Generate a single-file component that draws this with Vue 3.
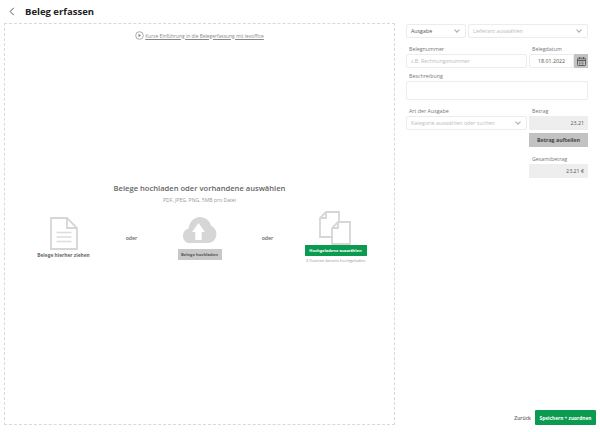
<template>
  <div class="page">
    <header class="head">
      <svg class="back" width="6" height="9" viewBox="0 0 6 9"><path d="M4.8 .8 1.2 4.5l3.6 3.7" fill="none" stroke="#555" stroke-width="1"/></svg>
      <h1>Beleg erfassen</h1>
    </header>

    <div class="main">
      <section class="drop">
        <a class="intro">
          <svg width="9" height="9" viewBox="0 0 9 9"><circle cx="4.5" cy="4.5" r="3.8" fill="none" stroke="#888" stroke-width=".7"/><path d="M3.5 2.7 6 4.5 3.5 6.300z" fill="#888"/></svg>
          <span>Kurze Einführung in die Belegerfassung mit lexoffice</span>
        </a>
        <h2>Belege hochladen oder vorhandene auswählen</h2>
        <p class="types">PDF, JPEG, PNG, 5MB pro Datei</p>

        <div class="options">
          <div class="opt">
            <svg width="28" height="33" viewBox="0 0 28 33" fill="none" stroke="#d6d6d6" stroke-width="1.800">
              <path d="M1 1h16l10 10v21H1z"/><path d="M17 1v10h10"/>
              <path d="M6.500 15.500h15M6.500 20h15M6.500 24.500h15" stroke="#dcdcdc" stroke-width="1.300"/>
            </svg>
            <strong class="drag">Belege hierher ziehen</strong>
          </div>
          <div class="or">oder</div>
          <div class="opt">
            <svg width="36" height="27" viewBox="0 0 36 27">
              <path d="M8 26C3.800 26 1 22.800 1 18.900c0-3.600 2.400-6.500 5.600-7.300C7.300 5 12 0 18 0c5.400 0 9.800 3.600 11 8.700 3.100 1.200 5.400 4.500 5.400 8.300 0 5-3.700 9-8.400 9z" fill="#d6d6d6"/>
              <path d="M16.500 6 23 15h-3.300v8h-6.400v-8H10z" fill="#fff"/>
            </svg>
            <button class="btn grey" type="button">Belege hochladen</button>
          </div>
          <div class="or">oder</div>
          <div class="opt files">
            <svg width="33" height="34" viewBox="0 0 33 34" fill="none" stroke="#d6d6d6" stroke-width="1.800">
              <path d="M13 26H1V7l6-6h13v10"/><path d="M7 1v6H1"/>
              <path d="M13 33V17l6-6h12v22z" fill="#fff"/><path d="M19 11v6h-6"/>
            </svg>
            <button class="btn green" type="button">Hochgeladene auswählen</button>
            <small>3 Dateien bereits hochgeladen</small>
          </div>
        </div>
      </section>

      <aside class="side">
        <div class="row">
          <div class="field select type"><span class="val">Ausgabe</span><i class="chev"></i></div>
          <div class="field select grow"><span class="ph">Lieferant auswählen</span><i class="chev"></i></div>
        </div>

        <div class="row labelled first">
          <div class="col grow">
            <label>Belegnummer</label>
            <div class="field"><span class="ph">z.B. Rechnungsnummer</span></div>
          </div>
          <div class="col amount">
            <label>Belegdatum</label>
            <div class="date">
              <div class="field center"><span class="val">18.01.2022</span></div>
              <div class="cal">
                <svg width="9" height="9" viewBox="0 0 9 9"><rect x=".5" y="1.200" width="8" height="7.300" rx="1" fill="none" stroke="#555" stroke-width=".9"/><path d="M.5 3.300h8" stroke="#555" stroke-width="1.200"/><path d="M2.500 0v2M6.500 0v2" stroke="#555"/><path d="M2 5h5M2 6.800h5" stroke="#555" stroke-width=".8" stroke-dasharray="1 .5"/></svg>
              </div>
            </div>
          </div>
        </div>

        <label class="desc">Beschreibung</label>
        <div class="field area"></div>

        <div class="row labelled second">
          <div class="col grow">
            <label>Art der Ausgabe</label>
            <div class="field select"><span class="ph">Kategorie auswählen oder suchen</span><i class="chev"></i></div>
          </div>
          <div class="col amount">
            <label>Betrag</label>
            <div class="sum">23,21</div>
            <button class="split" type="button">Betrag aufteilen</button>
            <label class="total">Gesamtbetrag</label>
            <div class="sum">23,21 €</div>
          </div>
        </div>

        <footer class="foot">
          <a class="backlink">Zurück</a>
          <button class="btn green save" type="button">Speichern + zuordnen</button>
        </footer>
      </aside>
    </div>
  </div>
</template>

<script setup>
</script>

<style scoped>
.page {
  width: 600px;
  height: 432px;
  box-sizing: border-box;
  overflow: hidden;
  display: flex;
  flex-direction: column;
  background: #fff;
  font-family: "Open Sans", "Noto Sans", sans-serif;
  color: #666;
}

.head {
  height: 23px;
  flex: none;
  display: flex;
  align-items: center;
  gap: 10px;
  padding-left: 9px;
  box-sizing: border-box;
}

.back {
  flex: none;
}

h1 {
  margin: 0;
  font-size: 9.500px;
  font-weight: 700;
  color: #222;
}

.main {
  flex: 1;
  display: flex;
  padding: 0 4px 7px 4px;
  min-height: 0;
}

.drop {
  width: 391px;
  box-sizing: border-box;
  border: 1px dashed #d9d9d9;
  display: flex;
  flex-direction: column;
  align-items: center;
}

.intro {
  margin-top: 7px;
  display: flex;
  align-items: center;
  gap: 1px;
  font-size: 4.900px;
  color: #888;
  height: 9px;
}

.intro span {
  text-decoration: underline;
}

h2 {
  margin: 142px 0 0;
  font-size: 7.600px;
  line-height: 12px;
  font-weight: 600;
  color: #666;
}

.types {
  margin: 2px 0 0;
  font-size: 5.100px;
  line-height: 8px;
  color: #999;
}

.options {
  margin-top: 7px;
  display: grid;
  grid-template-columns: repeat(5, 68px);
  align-items: start;
}

.opt {
  display: flex;
  flex-direction: column;
  align-items: center;
  padding-top: 6px;
  white-space: nowrap;
}

.opt.files {
  padding-top: 0;
}

.drag {
  margin-top: 1px;
  font-size: 4.850px;
  line-height: 8px;
  font-weight: 700;
  color: #666;
}

.or {
  padding-top: 23px;
  text-align: center;
  font-size: 5.200px;
  line-height: 8px;
  font-weight: 600;
  color: #666;
}

.btn {
  border: none;
  padding: 0;
  font-family: inherit;
  font-weight: 700;
}

.grey {
  margin-top: 5px;
  width: 44px;
  height: 11px;
  background: #c8c8c8;
  color: #555;
  font-size: 4.200px;
}

.green {
  background: #0a9a50;
  color: #fff;
}

.files .green {
  margin-top: 0;
  width: 62px;
  height: 11px;
  font-size: 4.100px;
}

small {
  margin-top: 1px;
  font-size: 4.200px;
  line-height: 8px;
  color: #999;
}

.side {
  flex: 1;
  min-width: 0;
  display: flex;
  flex-direction: column;
  padding-left: 11px;
  padding-right: 12px;
  margin-right: -4px;
  margin-top: 1px;
}

.row {
  display: flex;
  gap: 2px;
}

.col {
  display: flex;
  flex-direction: column;
  min-width: 0;
}

.grow {
  flex: 1;
  min-width: 0;
}

.amount {
  width: 59px;
  flex: none;
}

label {
  font-size: 5.300px;
  line-height: 8px;
  color: #777;
  padding-left: 3px;
  margin-bottom: 1px;
}

.field {
  height: 14px;
  box-sizing: border-box;
  border: 1px solid #ececec;
  border-radius: 2px;
  display: flex;
  align-items: center;
  padding: 0 4px;
  font-size: 5.300px;
  background: #fff;
}

.type {
  width: 60px;
  flex: none;
}

.val {
  color: #555;
}

.ph {
  color: #bbb;
  white-space: nowrap;
}

.select {
  justify-content: space-between;
}

.chev {
  width: 3px;
  height: 3px;
  margin: -2px 2px 0 0;
  border-right: 1px solid #aaa;
  border-bottom: 1px solid #aaa;
  transform: rotate(45deg);
}

.first {
  margin-top: 7px;
}

.date {
  display: flex;
}

.center {
  flex: 1;
  justify-content: center;
}

.cal {
  width: 14px;
  height: 14px;
  flex: none;
  background: #c2c2c2;
  display: flex;
  align-items: center;
  justify-content: center;
}

.desc {
  margin-top: 4px;
}

.area {
  height: 19px;
}

.second {
  margin-top: 7px;
}

.sum {
  height: 14px;
  box-sizing: border-box;
  background: #eee;
  display: flex;
  align-items: center;
  justify-content: flex-end;
  padding-right: 4px;
  font-size: 5.300px;
  color: #555;
}

.split {
  margin-top: 3px;
  height: 14px;
  border: none;
  padding: 0;
  background: #c2c2c2;
  color: #444;
  font-family: inherit;
  font-size: 5.300px;
  font-weight: 700;
}

.total {
  margin-top: 8px;
}

.foot {
  margin-top: auto;
  display: flex;
  justify-content: flex-end;
  align-items: center;
  gap: 4px;
  margin-right: -8px;
}

.backlink {
  font-size: 5px;
  color: #666;
  font-weight: 600;
}

.save {
  width: 61px;
  height: 15px;
  font-size: 4.800px;
  border-radius: 1px;
}
</style>
